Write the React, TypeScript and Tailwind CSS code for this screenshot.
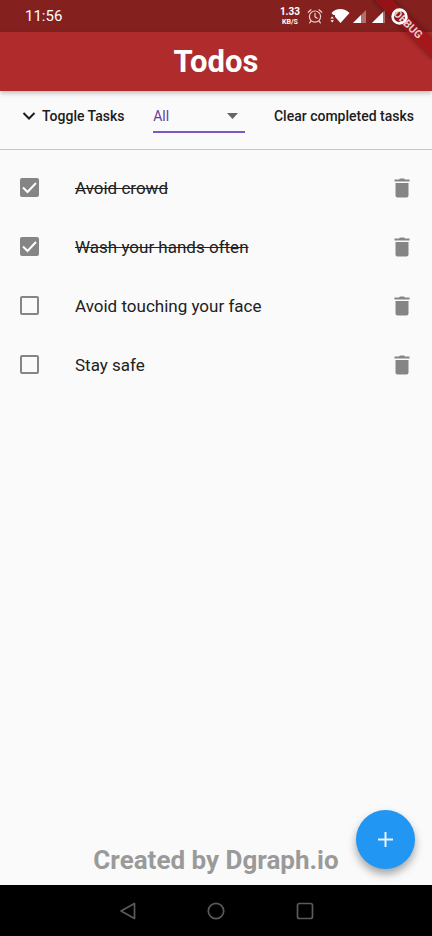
import { useState } from "react";

type Todo = { id: number; title: string; done: boolean };

const initialTodos: Todo[] = [
  { id: 1, title: "Avoid crowd", done: true },
  { id: 2, title: "Wash your hands often", done: true },
  { id: 3, title: "Avoid touching your face", done: false },
  { id: 4, title: "Stay safe", done: false },
];

function StatusBar() {
  return (
    <div className="flex h-8 shrink-0 items-center justify-between bg-[#84211f] pr-6 pl-[25px] text-white">
      <span className="text-[15px] leading-5">11:56</span>
      <div className="flex items-center">
        <div className="flex flex-col items-center font-bold">
          <span className="text-[10px] leading-3">1.33</span>
          <span className="text-[7px] leading-2">KB/S</span>
        </div>
        <svg className="ml-[7px] h-4 w-4" viewBox="0 0 16 16" fill="none" stroke="#ead2d2" strokeWidth="1.2" strokeLinecap="round">
          <circle cx="8" cy="8.6" r="5.6" />
          <path d="M8 5.4v3.4l2.2 1.4M1.2 4.2 4 1.8M14.800 4.200 12 1.800M3.800 13.400l-1.200 1.400M12.200 13.400l1.200 1.400" />
        </svg>
        <svg className="ml-[7px] h-4 w-5" viewBox="0 0 20 16" fill="#fff">
          <path d="M1.500 5C6-.4 14.500-.4 19.500 5L10.500 15 5 8.800V7H3.300z" />
          <path d="M.5 10.600 2.200 8.400l1.700 2.200zM.5 12.200h3.400l-1.700 2.200z" />
        </svg>
        <svg className="ml-[2px] h-4 w-[15px]" viewBox="0 0 15 16">
          <path d="M1 15 14 2v13z" fill="#b07070" />
          <path d="M1 15 9 7v8z" fill="#fff" />
        </svg>
        <svg className="ml-1 h-4 w-[15px]" viewBox="0 0 15 16">
          <path d="M1 15 14 2v13z" fill="#b07070" />
          <path d="M1 15 12 4v11z" fill="#fff" />
        </svg>
        <svg className="relative z-10 ml-[5px] h-[17px] w-[17px]" viewBox="0 0 17 17" fill="none" stroke="#fff">
          <circle cx="8.500" cy="8.500" r="6.900" strokeWidth="2.600" />
        </svg>
      </div>
    </div>
  );
}

function DebugBanner() {
  return (
    <div className="pointer-events-none absolute top-0 right-0 h-[60px] w-[60px] overflow-hidden">
      <div className="absolute top-[18px] -left-4 flex h-[13px] w-[104px] rotate-45 items-center justify-center bg-[#a00a10]/60 text-[11px] leading-[13px] font-bold text-[#e6cccc] shadow-[0_0_6px_rgba(0,0,0,0.4)]">
        DEBUG
      </div>
    </div>
  );
}

function TrashIcon() {
  return (
    <svg className="h-6 w-6" viewBox="0 0 24 24" fill="#858585">
      <path d="M5.500 7h13v12.500a2 2 0 0 1-2 2h-9a2 2 0 0 1-2-2zM4.500 3.500H9L10 2.500h4l1 1h4.500v2h-15z" />
    </svg>
  );
}

function TodoRow({ todo, onToggle, onDelete }: { todo: Todo; onToggle: () => void; onDelete: () => void }) {
  const id = `todo-${todo.id}`;
  return (
    <li className="flex h-[59px] items-center pr-[18px] pl-5">
      <span className="grid h-[19px] w-[19px] shrink-0 place-items-center">
        <input
          id={id}
          type="checkbox"
          checked={todo.done}
          onChange={onToggle}
          className="peer col-start-1 row-start-1 m-0 h-[19px] w-[19px] appearance-none rounded-[2px] border-2 border-[#858585] checked:bg-[#858585]"
        />
        <svg className="pointer-events-none invisible col-start-1 row-start-1 h-[19px] w-[19px] peer-checked:visible" viewBox="0 0 19 19" fill="none" stroke="#fff" strokeWidth="2">
          <path d="m3 9.500 4.500 4.500L16 5" />
        </svg>
      </span>
      <label htmlFor={id} className={`ml-9 flex-1 text-[17px] leading-6 text-[#212121] ${todo.done ? "line-through decoration-1" : ""}`}>
        {todo.title}
      </label>
      <button type="button" aria-label={`Delete ${todo.title}`} onClick={onDelete}>
        <TrashIcon />
      </button>
    </li>
  );
}

function NavigationBar() {
  return (
    <nav className="h-[51px] shrink-0 bg-black">
      <div className="mx-auto flex h-full w-[202px] items-center justify-between">
        <button type="button" aria-label="Back">
          <svg className="h-5 w-6" viewBox="0 0 24 20" fill="none" stroke="#5a5a5a" strokeWidth="1.700" strokeLinejoin="round">
            <path d="M19.500 2.500v15L6 10z" />
          </svg>
        </button>
        <button type="button" aria-label="Home">
          <svg className="h-5 w-6" viewBox="0 0 24 20" fill="none" stroke="#5a5a5a" strokeWidth="1.700">
            <circle cx="12" cy="10" r="7.700" />
          </svg>
        </button>
        <button type="button" aria-label="Recent apps">
          <svg className="h-5 w-6" viewBox="0 0 24 20" fill="none" stroke="#5a5a5a" strokeWidth="1.700">
            <rect x="4.500" y="2.500" width="15" height="15" rx="2" />
          </svg>
        </button>
      </div>
    </nav>
  );
}

export default function App() {
  const [todos, setTodos] = useState(initialTodos);
  const [filter, setFilter] = useState("All");

  const visible = todos.filter((t) => filter === "All" || (filter === "Completed") === t.done);
  const toggleAll = () => {
    const allDone = todos.every((t) => t.done);
    setTodos(todos.map((t) => ({ ...t, done: !allDone })));
  };

  return (
    <div className="relative flex min-h-screen flex-col bg-[#fafafa] font-[Roboto,sans-serif]">
      <StatusBar />
      <header className="flex h-[59px] shrink-0 items-center justify-center bg-[#b02c2c] shadow-[0_2px_5px_rgba(0,0,0,0.25)]">
        <h1 className="text-[31px] leading-9 font-bold text-white">Todos</h1>
      </header>
      <DebugBanner />

      <div className="flex h-[59px] shrink-0 items-center justify-between border-b border-[#c6c6c6] pr-[18px] pl-[22px] text-[#1c1c1c]">
        <button type="button" onClick={toggleAll} className="flex items-center gap-[6px] pb-2 text-[14px] leading-5 font-medium">
          <svg className="h-[14px] w-[14px]" viewBox="0 0 14 14" fill="none" stroke="currentColor" strokeWidth="2">
            <path d="m1.500 4 5.500 5.500L12.500 4" />
          </svg>
          Toggle Tasks
        </button>
        <div className="grid w-[92px] items-center pb-2">
          <select
            aria-label="Filter tasks"
            value={filter}
            onChange={(e) => setFilter(e.target.value)}
            className="col-start-1 row-start-1 mt-[6px] h-7 appearance-none border-b-2 border-[#7e57c2] pb-1 text-[14px] text-[#673a9e] outline-none"
          >
            <option>All</option>
            <option>Active</option>
            <option>Completed</option>
          </select>
          <svg className="pointer-events-none col-start-1 row-start-1 mr-[7px] h-[6px] w-[11px] justify-self-end" viewBox="0 0 11 6" fill="#666">
            <path d="M0 0h11L5.500 6z" />
          </svg>
        </div>
        <button
          type="button"
          onClick={() => setTodos(todos.filter((t) => !t.done))}
          className="pb-2 text-[14px] leading-5 font-medium"
        >
          Clear completed tasks
        </button>
      </div>

      <main className="flex flex-1 flex-col">
        <ul className="pt-2">
          {visible.map((todo) => (
            <TodoRow
              key={todo.id}
              todo={todo}
              onToggle={() => setTodos(todos.map((t) => (t.id === todo.id ? { ...t, done: !t.done } : t)))}
              onDelete={() => setTodos(todos.filter((t) => t.id !== todo.id))}
            />
          ))}
        </ul>
        <p className="mt-auto pb-2 text-center text-[26px] leading-[34px] font-bold text-[#9a9a9a]">Created by Dgraph.io</p>
      </main>

      <button
        type="button"
        aria-label="Add task"
        className="absolute right-[17px] bottom-[67px] flex h-[59px] w-[59px] items-center justify-center rounded-full bg-[#2196f3] shadow-[0_5px_8px_rgba(0,0,0,0.35)]"
      >
        <svg className="h-[15px] w-[15px]" viewBox="0 0 15 15" fill="none" stroke="#e8f4ff" strokeWidth="2">
          <path d="M7.500 0v15M0 7.500h15" />
        </svg>
      </button>
      <NavigationBar />
    </div>
  );
}
